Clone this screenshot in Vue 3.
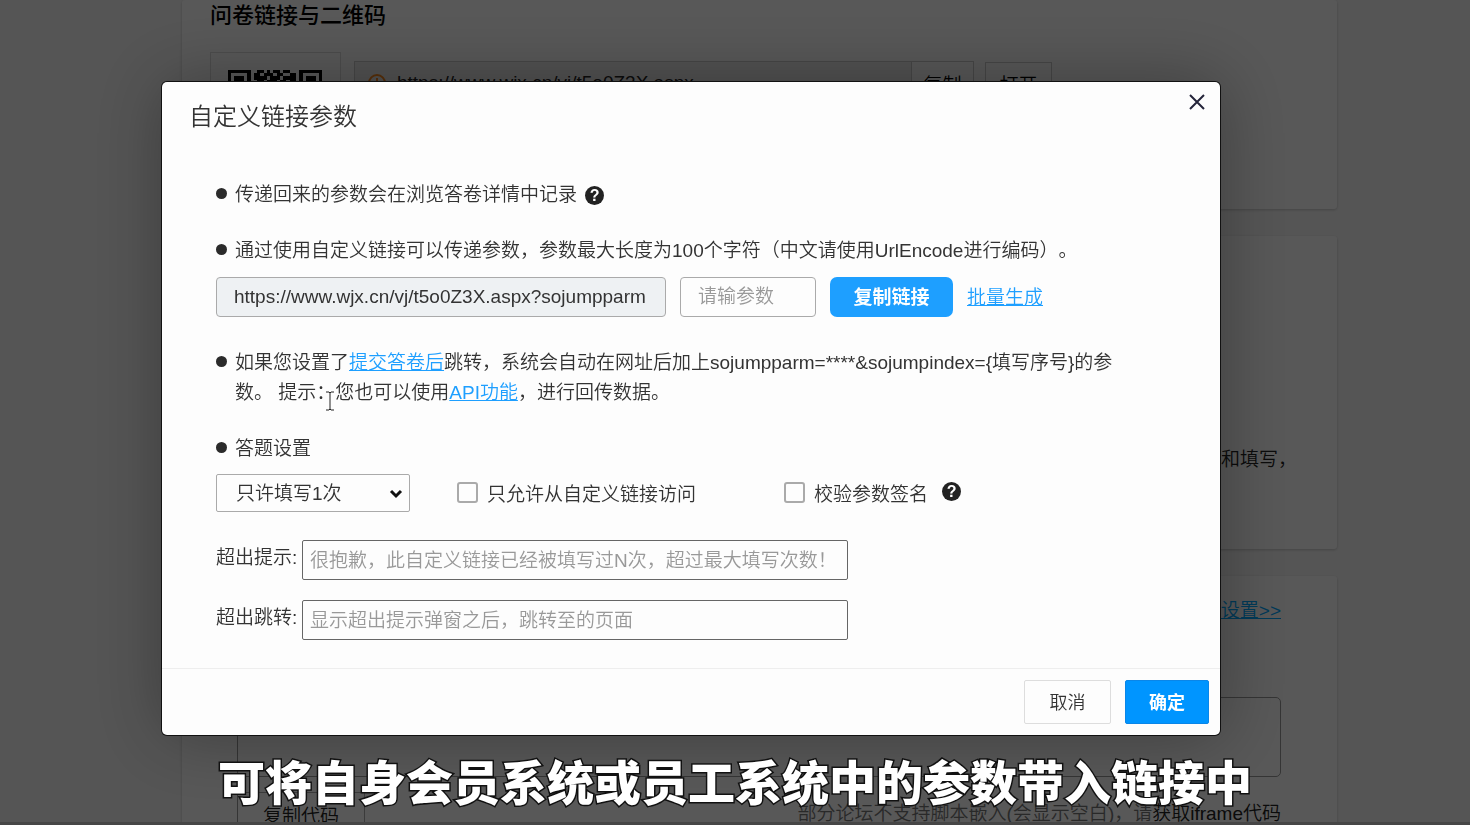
<script setup>
import { ref } from 'vue'

const link = ref('https://www.wjx.cn/vj/t5o0Z3X.aspx?sojumpparm')
const param = ref('')
const limit = ref('1')
const onlyCustom = ref(false)
const verifySign = ref(false)
const overTip = ref('')
const overJump = ref('')

const qrRows = [
  '11111110011010110110001111111',
  '10000010110111011001101000001',
  '10111010111101110111101011101',
  '10111010011011101101101011101',
  '10111010100110011010001011101',
  '10000010110010110101101000001',
  '11111110101010101010101111111',
]
const qrCells = qrRows.flatMap((row, y) =>
  [...row].map((v, x) => ({ x, y, on: v === '1' })).filter((c) => c.on)
)
</script>

<template>
  <div class="page">
    <section class="card card-link">
      <h2>问卷链接与二维码</h2>
      <div class="share">
        <div class="qr">
          <svg viewBox="0 0 29 29" width="94" height="94" shape-rendering="crispEdges" aria-hidden="true">
            <rect v-for="c in qrCells" :key="c.x + '-' + c.y" :x="c.x" :y="c.y" width="1" height="1" />
          </svg>
        </div>
        <div class="share-url">
          <div class="share-text">
            <svg viewBox="0 0 20 20" width="20" height="20" aria-hidden="true">
              <circle cx="10" cy="10" r="8" fill="none" stroke="#ff8a1c" stroke-width="2" />
              <path d="M10 5v6M10 13v2" stroke="#ff8a1c" stroke-width="2" />
            </svg>
            <span>https://www.wjx.cn/vj/t5o0Z3X.aspx</span>
          </div>
          <button type="button">复制</button>
        </div>
        <button type="button" class="open">打开</button>
      </div>
    </section>

    <section class="card card-note">
      <p>和填写，</p>
    </section>

    <section class="card card-code">
      <a href="#">设置&gt;&gt;</a>
      <div class="code-box"></div>
      <div class="code-foot">
        <button type="button">复制代码</button>
        <p>部分论坛不支持脚本嵌入(会显示空白)，请<a href="#">获取iframe代码</a></p>
      </div>
    </section>
  </div>

  <div class="overlay">
    <div class="dialog" role="dialog" aria-labelledby="dialog-title">
      <header>
        <h1 id="dialog-title">自定义链接参数</h1>
        <button type="button" class="close" aria-label="关闭">
          <svg viewBox="0 0 16 16" width="16" height="16" aria-hidden="true">
            <path d="M1 1l14 14M15 1L1 15" fill="none" stroke="#24243a" stroke-width="2" />
          </svg>
        </button>
      </header>

      <div class="body">
        <div class="item">传递回来的参数会在浏览答卷详情中记录<button type="button" class="help">?</button></div>
        <div class="item">通过使用自定义链接可以传递参数，参数最大长度为100个字符（中文请使用UrlEncode进行编码）。</div>
        <div class="link-row">
          <input v-model="link" class="url" type="text" readonly aria-label="自定义链接" />
          <input v-model="param" class="param" type="text" placeholder="请输参数" aria-label="参数" />
          <button type="button" class="copy">复制链接</button>
          <a href="#">批量生成</a>
        </div>
        <div class="item jump">如果您设置了<a href="#">提交答卷后</a>跳转，系统会自动在网址后加上sojumpparm=****&amp;sojumpindex={填写序号}的参数。&nbsp;提示：您也可以使用<a href="#">API功能</a>，进行回传数据。</div>
        <div class="item">答题设置</div>
        <div class="set-row">
          <div class="select">
            <select v-model="limit" aria-label="填写次数">
              <option value="1">只许填写1次</option>
            </select>
            <svg viewBox="0 0 14 10" width="14" height="10" aria-hidden="true">
              <path d="M2 2l5 5 5-5" fill="none" stroke="#111" stroke-width="3" />
            </svg>
          </div>
          <label class="check only"><input v-model="onlyCustom" type="checkbox" />只允许从自定义链接访问</label>
          <label class="check"><input v-model="verifySign" type="checkbox" />校验参数签名</label>
          <button type="button" class="help sign-help">?</button>
        </div>
        <div class="field">
          <label for="over-tip">超出提示:</label>
          <input id="over-tip" v-model="overTip" type="text" placeholder="很抱歉，此自定义链接已经被填写过N次，超过最大填写次数！" />
        </div>
        <div class="field">
          <label for="over-jump">超出跳转:</label>
          <input id="over-jump" v-model="overJump" type="text" placeholder="显示超出提示弹窗之后，跳转至的页面" />
        </div>
      </div>

      <footer>
        <button type="button" class="cancel">取消</button>
        <button type="button" class="ok">确定</button>
      </footer>

      <svg class="cursor" viewBox="0 0 10 20" width="10" height="20" aria-hidden="true">
        <path d="M1 1h3l1 1 1-1h3M5 2v16M1 19h3l1-1 1 1h3" fill="none" stroke="#222" />
      </svg>
    </div>
  </div>

  <p class="caption">可将自身会员系统或员工系统中的参数带入链接中</p>
  <div class="edge"></div>
</template>

<style>
html,
body,
#app {
  height: 100%;
}
body {
  margin: 0;
  overflow: hidden;
  background: #f7f7f7;
}
</style>

<style scoped>
* {
  box-sizing: border-box;
}
.page,
.overlay,
.caption,
button,
input,
select {
  font-family: "Liberation Sans", "Noto Sans CJK SC", sans-serif;
}
h1,
h2,
p {
  margin: 0;
}
button,
input,
select {
  margin: 0;
  font-size: 19px;
  font-weight: 350;
}
.page {
  height: 100vh;
  overflow: hidden;
  padding: 0 133px 0 182px;
  display: flex;
  flex-direction: column;
  gap: 27px;
  font-size: 19px;
  color: #222;
  font-weight: 350;
}
.card {
  flex: none;
  background: #fff;
  border-radius: 3px;
  box-shadow: 0 1px 3px rgba(0, 0, 0, 0.2);
}
.card-link {
  height: 209px;
  padding: 0 28px;
}
.card-link h2 {
  font-size: 22px;
  line-height: 32px;
  font-weight: 500;
  color: #000;
}
.share {
  display: flex;
  align-items: flex-start;
  padding-top: 20px;
}
.qr {
  width: 131px;
  height: 131px;
  padding: 17px;
  border: 1px solid #ddd;
}
.share-url {
  display: flex;
  width: 620px;
  height: 44px;
  margin: 9px 11px 0 13px;
  border: 1px solid #ccc;
}
.share-text {
  flex: 1;
  display: flex;
  align-items: center;
  gap: 10px;
  padding-left: 12px;
  background: #eee;
}
.share button {
  width: 62px;
  padding: 0;
  border: 0;
  border-left: 1px solid #ccc;
  background: #fff;
  color: #000;
}
.share .open {
  width: 67px;
  height: 42px;
  margin-top: 10px;
  border: 1px solid #ccc;
}
.card-note {
  height: 313px;
  padding: 209px 40px 0;
  text-align: right;
  line-height: 30px;
}
.card-code {
  height: 300px;
  padding: 20px 56px 0 55px;
  display: flex;
  flex-direction: column;
}
.card-code > a {
  align-self: flex-end;
  line-height: 30px;
  color: #00a8ff;
}
.code-box {
  height: 80px;
  margin-top: 71px;
  border: 1px solid #999;
  border-radius: 5px;
}
.code-foot {
  display: flex;
  justify-content: space-between;
  padding-top: 15px;
  border-left: 1px solid #999;
}
.code-foot button {
  width: 127px;
  height: 44px;
  border: 1px solid #aaa;
  border-left: 0;
  background: transparent;
  color: #222;
}
.code-foot p {
  line-height: 44px;
  color: #777;
}
.code-foot a {
  color: #222;
  text-decoration: none;
}
.overlay {
  position: fixed;
  inset: 0;
  padding: 82px 250px 0 162px;
  background: rgba(0, 0, 0, 0.655);
  font-size: 19px;
  color: #333;
  font-weight: 350;
}
.dialog {
  position: relative;
  background: #fdfdfd;
  border-radius: 5px;
  box-shadow: 0 0 0 1px #111, 0 0 70px 4px rgba(0, 0, 0, 0.3);
}
.dialog a {
  color: #1e9fff;
}
header {
  display: flex;
  justify-content: space-between;
  align-items: flex-start;
  height: 97px;
  padding: 0 15px 0 27px;
}
h1 {
  margin-top: 17px;
  font-size: 24px;
  line-height: 36px;
  font-weight: 350;
}
.close {
  display: flex;
  margin-top: 12px;
  padding: 0;
  border: 0;
  background: none;
}
.body {
  padding: 0 96px 28px 54px;
}
.item {
  position: relative;
  margin-bottom: 25px;
  padding: 1px 0 0 19px;
  line-height: 30px;
  text-spacing-trim: space-all;
}
.item::before {
  content: "";
  position: absolute;
  left: 0;
  top: 9px;
  width: 11px;
  height: 11px;
  border-radius: 50%;
  background: #2b2b2b;
}
.help {
  display: inline-flex;
  align-items: center;
  justify-content: center;
  width: 19px;
  height: 19px;
  margin-left: 8px;
  padding: 0;
  border: 0;
  border-radius: 50%;
  background: #222;
  color: #fff;
  font-size: 16px;
  font-weight: 700;
  line-height: 19px;
  vertical-align: middle;
}
.link-row {
  display: flex;
  align-items: center;
  gap: 14px;
  margin: -14px 0 30px;
}
.link-row input {
  height: 40px;
  padding: 0 17px;
  border: 1px solid #aaa;
  border-radius: 4px;
  background: #fdfdfd;
  color: #333;
}
.link-row .url {
  width: 450px;
  background: #eef1f3;
}
.link-row .param {
  width: 136px;
}
.link-row a {
  padding-bottom: 3px;
}
input::placeholder {
  color: #999;
  opacity: 1;
}
.copy {
  width: 123px;
  height: 40px;
  padding: 0 0 3px;
  border: 0;
  border-radius: 7px;
  background: #1e9fff;
  color: #fff;
  font-weight: 700;
}
.set-row {
  display: flex;
  align-items: center;
  margin: -15px 0 28px;
}
.select {
  position: relative;
  width: 194px;
  margin-right: 47px;
}
.select select {
  display: block;
  width: 100%;
  height: 38px;
  padding: 1px 19px 0;
  appearance: none;
  border: 1px solid #aaa;
  border-radius: 2px;
  background: #fdfdfd;
  color: #333;
}
.select svg {
  position: absolute;
  right: 7px;
  top: 15px;
  pointer-events: none;
}
.check {
  display: flex;
  align-items: center;
  gap: 9px;
  padding-bottom: 2px;
}
.check input {
  width: 21px;
  height: 21px;
  appearance: none;
  border: 2px solid #aaa;
  border-radius: 3px;
  background: #fdfdfd;
}
.only {
  margin-right: 88px;
}
.sign-help {
  margin: 0 0 4px 14px;
}
.field {
  display: flex;
  align-items: center;
}
.field + .field {
  margin-top: 20px;
}
.field label {
  width: 86px;
  line-height: 30px;
  padding-bottom: 4px;
}
.field input {
  width: 546px;
  height: 40px;
  padding: 1px 7px 0;
  border: 1px solid #666;
  border-radius: 2px;
  background: #fdfdfd;
}
footer {
  display: flex;
  justify-content: flex-end;
  gap: 14px;
  padding: 11px;
  border-top: 1px solid #eee;
}
footer button {
  height: 44px;
  padding: 0 0 2px;
  border-radius: 2px;
  font-size: 18px;
}
.cancel {
  width: 87px;
  border: 1px solid #ddd;
  background: #fdfdfd;
  color: #333;
}
.ok {
  width: 84px;
  border: 1px solid #0a86e8;
  background: #0095ff;
  color: #fff;
  font-weight: 700;
}
.cursor {
  position: absolute;
  left: 163px;
  top: 309px;
}
.caption {
  position: fixed;
  left: 0;
  right: 0;
  bottom: 11px;
  text-align: center;
  font-size: 47px;
  line-height: 60px;
  font-weight: 900;
  color: #fff;
  -webkit-text-stroke: 3px #111;
  paint-order: stroke fill;
}
.edge {
  position: fixed;
  left: 0;
  right: 0;
  bottom: 0;
  height: 3px;
  background: #464646;
}
</style>
